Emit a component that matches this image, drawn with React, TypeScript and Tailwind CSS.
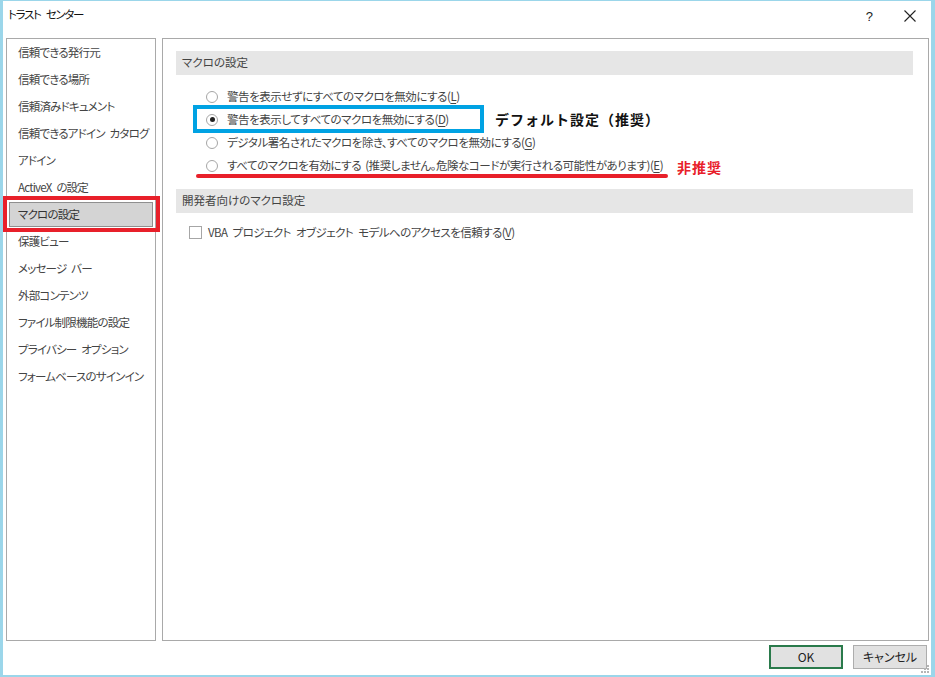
import React from "react";

const font = "font-['Noto_Sans_CJK_JP','Noto_Sans',sans-serif] [font-feature-settings:'palt']";

const menu = [
  "信頼できる発行元",
  "信頼できる場所",
  "信頼済みドキュメント",
  "信頼できるアドイン カタログ",
  "アドイン",
  "ActiveX の設定",
  "マクロの設定",
  "保護ビュー",
  "メッセージ バー",
  "外部コンテンツ",
  "ファイル制限機能の設定",
  "プライバシー オプション",
  "フォームベースのサインイン",
];

const options: { text: string; key: string; checked?: boolean }[] = [
  { text: "警告を表示せずにすべてのマクロを無効にする", key: "L" },
  { text: "警告を表示してすべてのマクロを無効にする", key: "D", checked: true },
  { text: "デジタル署名されたマクロを除き、すべてのマクロを無効にする", key: "G" },
  { text: "すべてのマクロを有効にする (推奨しません。危険なコードが実行される可能性があります)", key: "E" },
];

function Radio({ checked }: { checked?: boolean }) {
  return (
    <span className="w-[12px] h-[12px] rounded-full border border-[#a6a6a6] bg-white flex items-center justify-center shrink-0">
      {checked && <span className="w-[5px] h-[5px] rounded-full bg-[#222]" />}
    </span>
  );
}

function SectionHeader({ children }: { children: React.ReactNode }) {
  return (
    <div className="h-[24px] bg-[#e6e6e6] flex items-center pl-[6px] text-[11.5px] text-[#444] whitespace-nowrap">
      {children}
    </div>
  );
}

export default function App() {
  return (
    <div className={`${font} relative w-[935px] h-[677px] bg-white border-[#9bd6ea] border-t border-l-[3px] border-r-[4px] border-b-2 flex flex-col text-[#444]`}>
      {/* title bar */}
      <div className="h-[37px] flex items-start pt-[5px] pl-[5px] pr-[14px]">
        <span className="text-[11.5px] text-[#111] tracking-[-1.3px] [word-spacing:4px] whitespace-nowrap">トラスト センター</span>
        <span className="ml-auto mt-[1px] text-[13px] text-[#222] font-['Liberation_Sans',sans-serif]">?</span>
        <svg className="ml-[30px] mt-[3px]" width="14" height="14" viewBox="0 0 14 14">
          <path d="M1.5 1.5 L12.5 12.5 M12.5 1.5 L1.5 12.5" stroke="#222" strokeWidth="1.1" />
        </svg>
      </div>

      {/* body */}
      <div className="flex-1 flex gap-[6px] pl-[3px] pr-[2px]">
        {/* category list */}
        <div className="w-[150px] shrink-0 border border-[#a9a9a9] pt-[1px] flex flex-col gap-[2px]">
          {menu.map((m) => (
            <div
              key={m}
              className={`h-[25px] mx-[2px] pl-[8px] flex items-center text-[11.5px] whitespace-nowrap tracking-[-0.8px] [word-spacing:3px] border ${
                m === "マクロの設定" ? "bg-[#d4d4d4] border-[#8f8f8f] text-[#333]" : "border-transparent"
              }`}
            >
              {m}
            </div>
          ))}
        </div>

        {/* settings pane */}
        <div className="relative flex-1 border border-[#a9a9a9] pt-[12px] pl-[13px] pr-[15px]">
          <SectionHeader>マクロの設定</SectionHeader>
          <div className="mt-[10px] flex flex-col">
            {options.map((o) => (
              <div key={o.key} className="h-[23px] flex items-center pl-[30px] gap-[9px] text-[11.5px] tracking-[-0.45px] [word-spacing:2px] whitespace-nowrap">
                <Radio checked={o.checked} />
                <span>
                  {o.text}(<span className="underline underline-offset-2">{o.key}</span>)
                </span>
              </div>
            ))}
          </div>

          <div className="mt-[12px]">
            <SectionHeader>開発者向けのマクロ設定</SectionHeader>
          </div>
          <div className="mt-[8px] h-[23px] flex items-center pl-[13px] gap-[6px] text-[11.5px] tracking-[-0.55px] [word-spacing:3px] whitespace-nowrap">
            <span className="w-[13px] h-[13px] border border-[#a6a6a6] bg-white shrink-0" />
            <span>
              VBA プロジェクト オブジェクト モデルへのアクセスを信頼する(<span className="underline underline-offset-2">V</span>)
            </span>
          </div>

          {/* annotations */}
          <div className="absolute left-[30px] top-[66px] w-[291px] h-[28px] border-[4px] border-[#00a2e3]" />
          <div className="absolute left-[332px] top-[70px] text-[14px] font-bold text-[#111] tracking-[1px] whitespace-nowrap [font-feature-settings:normal]">
            デフォルト設定（推奨）
          </div>
          <div className="absolute left-[33px] top-[135px] w-[472px] h-[4px] rounded-full bg-[#e8202a]" />
          <div className="absolute left-[514px] top-[118px] text-[14px] font-bold text-[#e8202a] tracking-[1px] whitespace-nowrap [font-feature-settings:normal]">
            非推奨
          </div>
        </div>
      </div>

      {/* footer */}
      <div className="h-[34px] flex justify-end items-start pt-[4px] pr-[4px] gap-[10px]">
        <button className="w-[74px] h-[24px] bg-[#e1e1e1] border-2 border-[#2a7a4b] text-[12px] text-[#222]">OK</button>
        <button className="w-[74px] h-[24px] bg-[#e1e1e1] border border-[#adadad] text-[12px] text-[#222]">キャンセル</button>
      </div>

      {/* resize grip */}
      <svg className="absolute right-[1px] bottom-[1px]" width="10" height="10" viewBox="0 0 10 10">
        {[
          [7, 1],
          [4, 4],
          [7, 4],
          [1, 7],
          [4, 7],
          [7, 7],
        ].map(([x, y]) => (
          <rect key={`${x}-${y}`} x={x} y={y} width="2" height="2" fill="#b5b5b5" />
        ))}
      </svg>

      {/* highlight around the selected category */}
      <div className="absolute left-0 top-[195px] w-[157px] h-[36px] border-[4px] border-[#e8202a]" />
    </div>
  );
}
